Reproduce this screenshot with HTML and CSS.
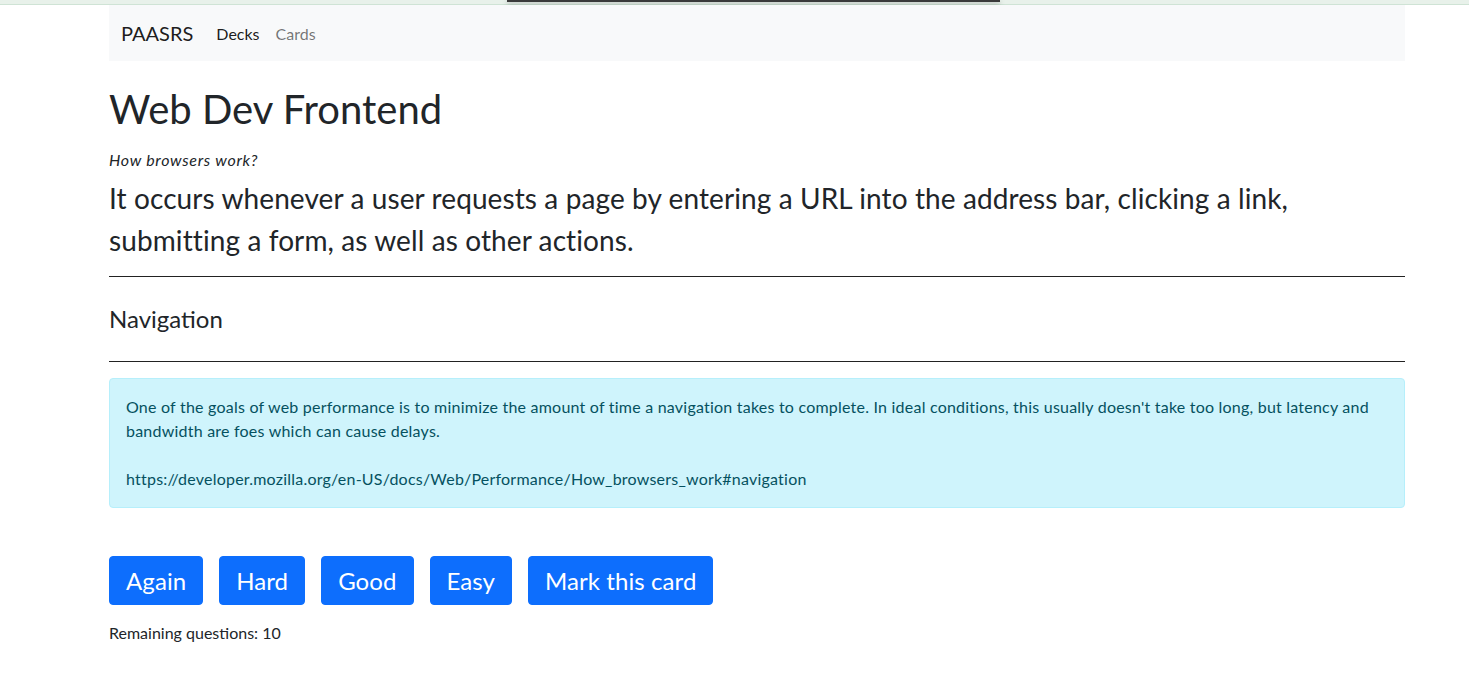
FILE: index.html
```html
<!DOCTYPE html>
<html lang="en">
<head>
<meta charset="utf-8">
<title>PAASRS</title>
<link rel="stylesheet" href="styles.css">
</head>
<body>
<div class="topstrip"><div class="topbar"></div></div>
<div class="container">
  <nav class="navbar">
    <span class="brand">PAASRS</span>
    <a class="nav-link active" href="#">Decks</a>
    <a class="nav-link" href="#">Cards</a>
  </nav>
  <h1 class="title">Web Dev Frontend</h1>
  <div class="subtitle"><em>How browsers work?</em></div>
  <p class="lead">It occurs whenever a user requests a page by entering a URL into the address bar, clicking a link, submitting a form, as well as other actions.</p>
  <hr class="rule">
  <h4 class="answer">Navigation</h4>
  <hr class="rule">
  <div class="alert">
    <div>One of the goals of web performance is to minimize the amount of time a navigation takes to complete. In ideal conditions, this usually doesn't take too long, but latency and bandwidth are foes which can cause delays.</div>
    <div class="blank"></div>
    <div>https://developer.mozilla.org/en-US/docs/Web/Performance/How_browsers_work#navigation</div>
  </div>
  <div class="buttons">
    <button class="btn">Again</button>
    <button class="btn">Hard</button>
    <button class="btn">Good</button>
    <button class="btn">Easy</button>
    <button class="btn">Mark this card</button>
  </div>
  <div class="remaining">Remaining questions: 10</div>
</div>
</body>
</html>
```
FILE: styles.css
```css
* { box-sizing: border-box; }
body {
  margin: 0;
  background: #fff;
  color: #212529;
  font-family: Lato, "Noto Sans", sans-serif;
  font-size: 16px;
}
.topstrip {
  height: 5px;
  background: #e8f1ea;
  border-bottom: 1px solid #cfe3d5;
}
.topbar {
  margin-left: 507px;
  width: 493px;
  height: 2px;
  background: #3a3a3a;
  box-shadow: 0 2px 5px rgba(0,0,0,0.35);
}
.container {
  margin-left: 109px;
  width: 1296px;
}
.navbar {
  display: flex;
  align-items: center;
  height: 56px;
  padding: 0 12px;
  background: #f8f9fa;
}
.brand {
  font-size: 20px;
  margin-right: 15px;
  color: rgba(0,0,0,0.9);
}
.nav-link {
  padding: 8px;
  font-size: 16px;
  text-decoration: none;
  color: rgba(0,0,0,0.55);
}
.nav-link.active { color: rgba(0,0,0,0.9); }
.title {
  margin: 24px 0 15px;
  font-size: 40px;
  font-weight: 400;
  line-height: 48px;
}
.subtitle {
  font-size: 16px;
  line-height: 24px;
  letter-spacing: 0.7px;
}
.lead {
  margin: 5px 0 0;
  font-size: 28px;
  line-height: 42px;
  letter-spacing: 0.1px;
}
.rule {
  margin: 0;
  border: 0;
  border-top: 1px solid #222;
}
.rule:first-of-type { margin-top: 15px; }
.answer {
  margin: 0;
  padding: 24px 0;
  font-size: 24px;
  font-weight: 400;
  line-height: 36px;
}
.alert {
  margin-top: 16px;
  padding: 16px;
  background: #cff4fc;
  border: 1px solid #b6effb;
  border-radius: 4px;
  color: #055160;
  font-size: 16px;
  letter-spacing: 0.22px;
  line-height: 24px;
}
.blank { height: 24px; }
.buttons {
  display: flex;
  gap: 16px;
  margin-top: 48px;
}
.btn {
  font-family: inherit;
  font-size: 24px;
  line-height: 31px;
  padding: 8px 16px;
  letter-spacing: 0.08px;
  color: #fff;
  background: #0d6efd;
  border: 1px solid #0d6efd;
  border-radius: 4px;
}
.remaining {
  margin-top: 16px;
  font-size: 16px;
  line-height: 24px;
}
```
